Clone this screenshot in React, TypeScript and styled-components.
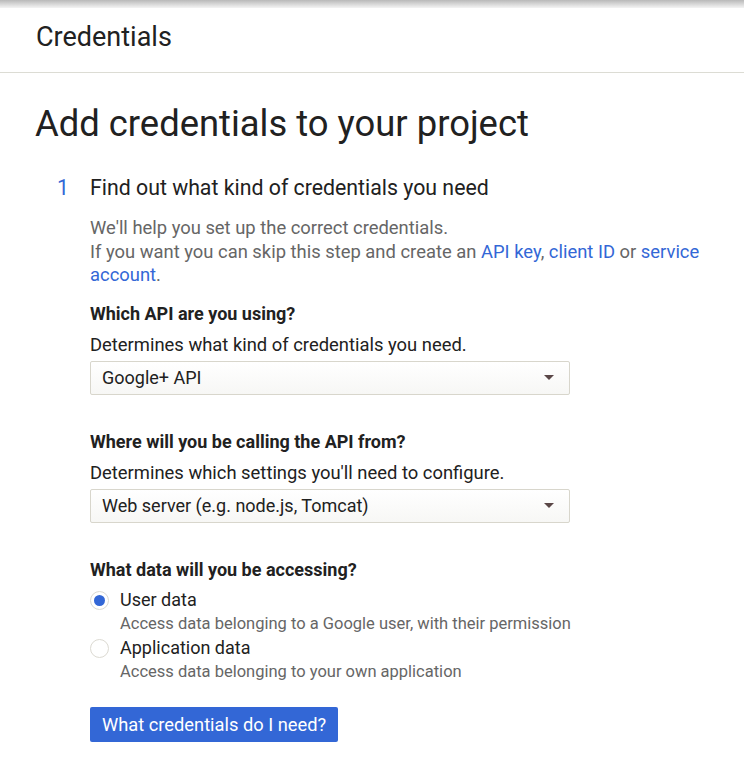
import styled, { createGlobalStyle } from "styled-components"

const GlobalStyle = createGlobalStyle`
  html, body {
    margin: 0;
    padding: 0;
    background: #ffffff;
    font-family: Roboto, "Liberation Sans", Arial, sans-serif;
    color: #212121;
  }
`

const PageContainer = styled.div`
  display: flex;
  flex-direction: column;
  width: 100%;
  box-sizing: border-box;
`

const TopShadow = styled.div`
  height: 8px;
  background: linear-gradient(#b9b9b9, #f4f4f4);
`

const Header = styled.header`
  box-sizing: border-box;
  height: 65px;
  padding: 13px 0 0 36px;
  border-bottom: 1px solid #dcdcd4;
  font-size: 27px;
  line-height: 32px;
  color: #212121;
`

const Main = styled.main`
  display: flex;
  flex-direction: column;
  padding: 0 35px;
`

const PageTitle = styled.h1`
  margin: 27px 0 0;
  font-size: 36.4px;
  font-weight: 400;
  line-height: 48px;
  color: #212121;
`

const Step = styled.section`
  display: grid;
  grid-template-columns: 55px 1fr;
  margin-top: 26px;
`

const StepNumber = styled.div`
  font-size: 21.3px;
  line-height: 28px;
  color: #3367d6;
  padding-left: 22px;
`

const StepBody = styled.div`
  display: flex;
  flex-direction: column;
`

const StepTitle = styled.h2`
  margin: 0;
  font-size: 21.3px;
  font-weight: 400;
  line-height: 28px;
  color: #212121;
`

const Intro = styled.p`
  margin: 14px 0 0;
  font-size: 18.4px;
  line-height: 23.5px;
  color: #666666;
`

const Link = styled.a`
  color: #3367d6;
  text-decoration: none;
`

const Field = styled.div<{ $gap?: number }>`
  display: flex;
  flex-direction: column;
  margin-top: ${({ $gap }) => $gap ?? 15}px;
`

const Label = styled.div`
  font-size: 18px;
  font-weight: 700;
  line-height: 24px;
  color: #212121;
`

const Hint = styled.div`
  margin-top: 7px;
  font-size: 18.4px;
  line-height: 24px;
  color: #212121;
`

const Select = styled.div`
  display: flex;
  align-items: center;
  justify-content: space-between;
  box-sizing: border-box;
  width: 480px;
  height: 34px;
  margin-top: 4px;
  padding: 0 15px 0 11px;
  border: 1px solid #d8d6cc;
  border-radius: 2px;
  background: linear-gradient(#ffffff, #f7f7f5);
  font-size: 18px;
  color: #212121;
`

const Caret = styled.span`
  width: 0;
  height: 0;
  border-left: 5px solid transparent;
  border-right: 5px solid transparent;
  border-top: 5px solid #5a4747;
`

const RadioGroup = styled.div`
  display: flex;
  flex-direction: column;
  margin-top: 6px;
`

const RadioRow = styled.div`
  display: grid;
  grid-template-columns: 30px 1fr;
  align-items: start;
`

const RadioCircle = styled.span<{ $checked?: boolean }>`
  display: flex;
  align-items: center;
  justify-content: center;
  box-sizing: border-box;
  width: 19px;
  height: 19px;
  margin-top: 3px;
  border-radius: 50%;
  border: 1px solid #dcdad2;
  background: #fff;

  &::after {
    content: "";
    width: 11px;
    height: 11px;
    border-radius: 50%;
    background: ${({ $checked }) => ($checked ? "#3367d6" : "transparent")};
  }
`

const RadioText = styled.div`
  display: flex;
  flex-direction: column;
`

const RadioLabel = styled.div`
  font-size: 18px;
  line-height: 24px;
  color: #212121;
`

const RadioDesc = styled.div`
  font-size: 16.5px;
  line-height: 24px;
  color: #666666;
`

const Button = styled.button`
  align-self: flex-start;
  margin-top: 23px;
  height: 35px;
  padding: 0 12px;
  border: none;
  border-radius: 2px;
  background: #3367d6;
  color: #ffffff;
  font-family: Roboto, "Liberation Sans", Arial, sans-serif;
  font-size: 18.3px;
  cursor: pointer;
`

export default function App() {
  return (
    <PageContainer>
      <GlobalStyle />
      <TopShadow />
      <Header>Credentials</Header>

      <Main>
        <PageTitle>Add credentials to your project</PageTitle>

        <Step>
          <StepNumber>1</StepNumber>
          <StepBody>
            <StepTitle>Find out what kind of credentials you need</StepTitle>
            <Intro>
              We'll help you set up the correct credentials.
              <br />
              If you want you can skip this step and create an <Link href="#">API key</Link>,{" "}
              <Link href="#">client ID</Link> or <Link href="#">service account</Link>.
            </Intro>

            <Field>
              <Label>Which API are you using?</Label>
              <Hint>Determines what kind of credentials you need.</Hint>
              <Select>
                Google+ API
                <Caret />
              </Select>
            </Field>

            <Field $gap={35}>
              <Label>Where will you be calling the API from?</Label>
              <Hint>Determines which settings you'll need to configure.</Hint>
              <Select>
                Web server (e.g. node.js, Tomcat)
                <Caret />
              </Select>
            </Field>

            <Field $gap={35}>
              <Label>What data will you be accessing?</Label>
              <RadioGroup>
                <RadioRow>
                  <RadioCircle $checked />
                  <RadioText>
                    <RadioLabel>User data</RadioLabel>
                    <RadioDesc>Access data belonging to a Google user, with their permission</RadioDesc>
                  </RadioText>
                </RadioRow>
                <RadioRow>
                  <RadioCircle />
                  <RadioText>
                    <RadioLabel>Application data</RadioLabel>
                    <RadioDesc>Access data belonging to your own application</RadioDesc>
                  </RadioText>
                </RadioRow>
              </RadioGroup>
            </Field>

            <Button>What credentials do I need?</Button>
          </StepBody>
        </Step>
      </Main>
    </PageContainer>
  )
}
